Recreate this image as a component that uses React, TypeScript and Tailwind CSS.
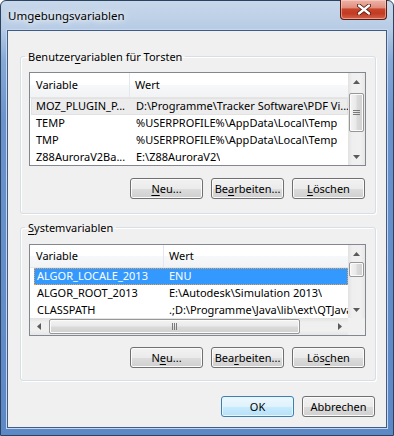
import React from "react";

type Row = { name: string; value: string };

const userRows: Row[] = [
  { name: "MOZ_PLUGIN_P...", value: "D:\\Programme\\Tracker Software\\PDF Vi..." },
  { name: "TEMP", value: "%USERPROFILE%\\AppData\\Local\\Temp" },
  { name: "TMP", value: "%USERPROFILE%\\AppData\\Local\\Temp" },
  { name: "Z88AuroraV2Ba...", value: "E:\\Z88AuroraV2\\" },
];

const sysRows: Row[] = [
  { name: "ALGOR_LOCALE_2013", value: "ENU" },
  { name: "ALGOR_ROOT_2013", value: "E:\\Autodesk\\Simulation 2013\\" },
  { name: "CLASSPATH", value: ".;D:\\Programme\\Java\\lib\\ext\\QTJava.zip" },
];

function Arrow({ dir }: { dir: "up" | "down" | "left" | "right" }) {
  const vertical = dir === "up" || dir === "down";
  const pts = {
    up: "0,4 3.5,0 7,4",
    down: "0,0 7,0 3.5,4",
    left: "4,0 4,7 0,3.5",
    right: "0,0 0,7 4,3.5",
  }[dir];
  return (
    <svg width={vertical ? 7 : 4} height={vertical ? 4 : 7} viewBox={vertical ? "0 0 7 4" : "0 0 4 7"}>
      <polygon points={pts} fill="#5a5a5a" />
    </svg>
  );
}

function VScroll({ thumbClass, grip }: { thumbClass: string; grip?: boolean }) {
  return (
    <div className="flex h-full w-[17px] shrink-0 flex-col bg-[linear-gradient(90deg,#e2e2e2,#efefef_25%,#f0f0f0_75%,#e6e6e6)]">
      <div className="flex h-[17px] shrink-0 items-center justify-center">
        <Arrow dir="up" />
      </div>
      <div className="flex-1">
        <div
          className={`${thumbClass} mx-[1px] flex items-center justify-center rounded-[2px] border border-[#979797] bg-[linear-gradient(90deg,#f4f4f4,#e9e9e9_45%,#dadada_55%,#d0d0d0)] shadow-[inset_0_0_0_1px_#fbfbfb]`}
        >
          {grip && (
            <div className="flex w-[7px] flex-col gap-[1px]">
              <div className="h-[1px] bg-[#7a7a7a]" />
              <div className="h-[1px] bg-[#7a7a7a]" />
              <div className="h-[1px] bg-[#7a7a7a]" />
            </div>
          )}
        </div>
      </div>
      <div className="flex h-[17px] shrink-0 items-center justify-center">
        <Arrow dir="down" />
      </div>
    </div>
  );
}

function HScroll() {
  return (
    <div className="flex h-[17px] shrink-0 bg-[linear-gradient(180deg,#e2e2e2,#efefef_25%,#f0f0f0_75%,#e6e6e6)]">
      <div className="flex w-[17px] shrink-0 items-center justify-center">
        <Arrow dir="left" />
      </div>
      <div className="flex flex-1 items-center pl-[2px]">
        <div className="flex h-[15px] w-[251px] items-center justify-center rounded-[2px] border border-[#979797] bg-[linear-gradient(180deg,#f4f4f4,#e9e9e9_45%,#dadada_55%,#d0d0d0)] shadow-[inset_0_0_0_1px_#fbfbfb]">
          <div className="flex h-[7px] gap-[1px]">
            <div className="w-[1px] bg-[#7a7a7a]" />
            <div className="w-[1px] bg-[#7a7a7a]" />
            <div className="w-[1px] bg-[#7a7a7a]" />
          </div>
        </div>
      </div>
      <div className="flex w-[17px] shrink-0 items-center justify-center">
        <Arrow dir="right" />
      </div>
    </div>
  );
}

function Header({ col1, h }: { col1: string; h: string }) {
  return (
    <div className={`${h} flex shrink-0 border-b border-[#e5e5e5] bg-[linear-gradient(180deg,#ffffff,#ffffff_50%,#f7f8f9_50%,#f2f3f5)]`}>
      <div className={`${col1} flex shrink-0 items-center border-r border-[#e3e8ee] pl-[6px]`}>Variable</div>
      <div className="flex flex-1 items-center pl-[5px]">Wert</div>
    </div>
  );
}

function Btn({ pre, u, post, primary }: { pre: string; u: string; post: string; primary?: boolean }) {
  return (
    <button
      className={
        primary
          ? "h-[21px] w-[73px] shrink-0 rounded-[3px] border border-[#3c7fb1] bg-[linear-gradient(180deg,#ecf7fd_0%,#dff2fc_50%,#c9ebfd_50%,#b6e0f7_100%)] leading-none text-black shadow-[inset_0_0_0_1px_#e6f6fe]"
          : "h-[21px] w-[73px] shrink-0 rounded-[3px] border border-[#707070] bg-[linear-gradient(180deg,#f2f2f2_0%,#ebebeb_50%,#dddddd_50%,#cfcfcf_100%)] leading-none text-black shadow-[inset_0_0_0_1px_#fbfbfb]"
      }
    >
      {pre}
      {u && <span className="underline underline-offset-[2px]">{u}</span>}
      {post}
    </button>
  );
}

export default function App() {
  return (
    <div className="h-[436px] w-[394px] overflow-hidden bg-white font-['Noto_Sans',sans-serif] text-[11px] text-black">
      <div className="flex h-full flex-col rounded-t-[6px] border border-[#2c4360] bg-[linear-gradient(180deg,#c8d8eb_0px,#b7cce5_28px,#86a8d6_60px,#6a93cc_120px,#5d88c6_100%)] px-[6px] pb-[7px]">
        {/* title bar */}
        <div className="flex h-[29px] shrink-0 items-start justify-between">
          <div className="pt-[7px] pl-[1px] text-[11.5px] leading-[15px] [text-shadow:0_0_6px_#fff,0_0_10px_#fff]">
            Umgebungsvariablen
          </div>
          <div className="mt-[-1px] flex h-[20px] w-[47px] items-center justify-center rounded-b-[4px] border border-t-0 border-[#5a1c12] bg-[linear-gradient(180deg,#eeb4a8_0%,#e08f7e_40%,#c8452c_48%,#c23a22_70%,#d4614a_100%)] shadow-[inset_0_0_0_1px_rgba(255,220,210,0.5)]">
            <svg width="14" height="11" viewBox="0 0 14 11">
              <path d="M2 1.5 L12 9.5 M12 1.5 L2 9.5" stroke="#4a1408" strokeWidth="4" strokeLinecap="round" />
              <path d="M2 1.5 L12 9.5 M12 1.5 L2 9.5" stroke="#ffffff" strokeWidth="2.4" strokeLinecap="round" />
            </svg>
          </div>
        </div>

        {/* client area */}
        <div className="flex min-w-0 flex-1 flex-col border border-[#3f5c85] bg-[#f0f0f0] pl-[12px] pr-[10px] shadow-[0_0_0_1px_#c5d7ee]">
          {/* Benutzervariablen */}
          <fieldset className="mt-[18px] min-w-0 rounded-[3px] border border-[#d5dfe5] pr-[9px] pb-[14px] pl-[8px] pt-[8px] shadow-[inset_1px_1px_0_#fff,1px_1px_0_#fff]">
            <legend className="ml-[-4px] px-[3px] leading-[15px]">
              Benutzer<span className="underline underline-offset-[2px]">v</span>ariablen für Torsten
            </legend>
            <div className="flex h-[94px] min-w-0 border border-[#828790] bg-white">
              <div className="flex min-w-0 flex-1 flex-col overflow-hidden">
                <Header col1="w-[100px]" h="h-[25px]" />
                {userRows.map((r, i) => (
                  <div
                    key={r.name}
                    className={`flex h-[17px] shrink-0 items-center whitespace-nowrap ${i === 0 ? "ml-[1px] bg-[#ececec] shadow-[inset_0_0_0_1px_#e2e2e2]" : "ml-[1px]"}`}
                  >
                    <div className="w-[99px] shrink-0 overflow-hidden pl-[5px]">{r.name}</div>
                    <div className="overflow-hidden pl-[6px]">{r.value}</div>
                  </div>
                ))}
              </div>
              <VScroll thumbClass="mt-[3px] h-[39px]" grip />
            </div>
            <div className="mt-[12px] flex justify-end gap-[8px] pr-[1px]">
              <Btn pre="" u="N" post="eu..." />
              <Btn pre="Be" u="a" post="rbeiten..." />
              <Btn pre="" u="L" post="öschen" />
            </div>
          </fieldset>

          {/* Systemvariablen */}
          <fieldset className="mt-[6px] min-w-0 rounded-[3px] border border-[#d5dfe5] pr-[9px] pb-[12px] pl-[8px] pt-[9px] shadow-[inset_1px_1px_0_#fff,1px_1px_0_#fff]">
            <legend className="ml-[-4px] px-[3px] leading-[15px]">
              <span className="underline underline-offset-[2px]">S</span>ystemvariablen
            </legend>
            <div className="flex h-[92px] min-w-0 border border-[#828790] bg-white">
              <div className="flex min-w-0 flex-1 flex-col">
                <div className="flex min-h-0 flex-1 flex-col overflow-hidden">
                  <Header col1="w-[134px]" h="h-[23px]" />
                  {sysRows.map((r, i) => (
                    <div
                      key={r.name}
                      className={`flex h-[17px] shrink-0 items-center whitespace-nowrap ${i === 0 ? "ml-[4px] bg-[#3399ff] text-white outline outline-1 outline-dotted outline-offset-[-1px] outline-[#f0a040]" : "ml-[4px]"}`}
                    >
                      <div className="w-[130px] shrink-0 overflow-hidden pl-[3px]">{r.name}</div>
                      <div className="overflow-hidden pl-[5px]">{r.value}</div>
                    </div>
                  ))}
                </div>
                <HScroll />
              </div>
              <div className="flex w-[17px] shrink-0 flex-col">
                <div className="min-h-0 flex-1">
                  <VScroll thumbClass="mt-0 h-[15px]" />
                </div>
                <div className="h-[17px] shrink-0 bg-[#f0f0f0]" />
              </div>
            </div>
            <div className="mt-[11px] flex justify-end gap-[8px] pr-[1px]">
              <Btn pre="N" u="e" post="u..." />
              <Btn pre="Bea" u="r" post="beiten..." />
              <Btn pre="Lös" u="c" post="hen" />
            </div>
          </fieldset>

          <div className="mt-[15px] flex justify-end gap-[8px] pr-[1px]">
            <Btn pre="OK" u="" post="" primary />
            <Btn pre="Abbrechen" u="" post="" />
          </div>
        </div>
      </div>
    </div>
  );
}
